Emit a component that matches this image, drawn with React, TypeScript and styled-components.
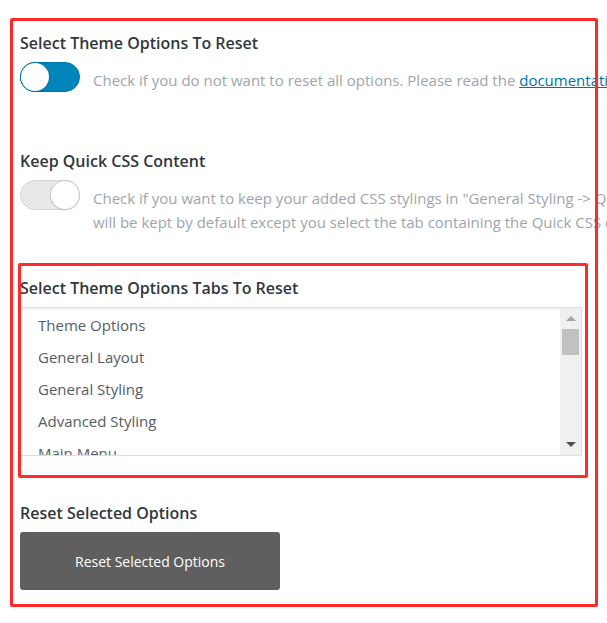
import styled, { createGlobalStyle } from "styled-components";

const GlobalStyle = createGlobalStyle`
  html, body {
    margin: 0;
    padding: 0;
    background: #ffffff;
    overflow: hidden;
  }
  body {
    font-family: "Open Sans", "Liberation Sans", sans-serif;
  }
`;

const tabs = [
  "Theme Options",
  "General Layout",
  "General Styling",
  "Advanced Styling",
  "Main Menu",
  "Footer",
];

const Page = styled.div`
  position: relative;
  width: 607px;
  height: 623px;
  padding: 33px 0 0 20px;
  box-sizing: border-box;
  overflow: hidden;
`;

const Field = styled.section<{ $gap: number }>`
  margin-bottom: ${(p) => p.$gap}px;
`;

const Title = styled.h3`
  margin: 0 0 9px;
  font-size: 16px;
  line-height: 20px;
  font-weight: 600;
  color: #32373c;
  white-space: nowrap;
`;

const Row = styled.div`
  display: flex;
  align-items: flex-start;
  gap: 13px;
`;

const Toggle = styled.span<{ $on: boolean }>`
  position: relative;
  flex: none;
  width: 60px;
  height: 30px;
  border-radius: 15px;
  box-sizing: border-box;
  background: ${(p) => (p.$on ? "#0085ba" : "#e8e8e8")};
  border: 1px solid ${(p) => (p.$on ? "#0073a5" : "#d6d6d6")};
  &::after {
    content: "";
    position: absolute;
    top: 0;
    ${(p) => (p.$on ? "left: 0;" : "right: 0;")}
    width: 28px;
    height: 28px;
    border-radius: 50%;
    background: #ffffff;
    box-shadow: 0 0 0 1px ${(p) => (p.$on ? "#0073a5" : "#c8c8c8")},
      0 1px 2px rgba(0, 0, 0, 0.15);
  }
`;

const Description = styled.p`
  margin: 0;
  padding-top: 6px;
  font-size: 15px;
  line-height: 24px;
  color: #a0a5aa;
  white-space: nowrap;
`;

const DocLink = styled.a`
  color: #0073aa;
  text-decoration: underline;
`;

const ListBox = styled.div`
  display: flex;
  width: 562px;
  height: 149px;
  box-sizing: border-box;
  border: 1px solid #dddddd;
  box-shadow: inset 0 2px 2px rgba(0, 0, 0, 0.06);
  background: #ffffff;
`;

const Options = styled.ul`
  flex: 1;
  margin: 0;
  padding: 1px 0 0 17px;
  list-style: none;
  overflow: hidden;
`;

const Option = styled.li`
  font-size: 15px;
  line-height: 32px;
  color: #555d66;
  white-space: nowrap;
`;

const Scrollbar = styled.div`
  display: flex;
  flex-direction: column;
  align-items: center;
  width: 21px;
  background: #f0f0f0;
`;

const Arrow = styled.span<{ $down?: boolean }>`
  width: 0;
  height: 0;
  border-left: 5px solid transparent;
  border-right: 5px solid transparent;
  ${(p) =>
    p.$down
      ? "border-top: 5px solid #505050; margin-top: auto; margin-bottom: 8px;"
      : "border-bottom: 5px solid #a3a3a3; margin-top: 8px;"}
`;

const Thumb = styled.span`
  width: 17px;
  height: 26px;
  margin-top: 8px;
  background: #c1c1c1;
`;

const Button = styled.button`
  width: 260px;
  height: 58px;
  border: none;
  border-radius: 3px;
  background: #5f5f5f;
  color: #ffffff;
  font-family: "Open Sans", "Liberation Sans", sans-serif;
  font-size: 14px;
`;

const Highlight = styled.div<{ $x: number; $y: number; $w: number; $h: number }>`
  position: absolute;
  left: ${(p) => p.$x}px;
  top: ${(p) => p.$y}px;
  width: ${(p) => p.$w}px;
  height: ${(p) => p.$h}px;
  box-sizing: border-box;
  border: 3px solid #ff2a2a;
  border-radius: 2px;
  pointer-events: none;
`;

export default function App() {
  return (
    <>
      <GlobalStyle />
      <Page>
        <Field $gap={59}>
          <Title>Select Theme Options To Reset</Title>
          <Row>
            <Toggle $on />
            <Description>
              Check if you do not want to reset all options. Please read the{" "}
              <DocLink href="#">documentation</DocLink> first.
            </Description>
          </Row>
        </Field>
        <Field $gap={44}>
          <Title>Keep Quick CSS Content</Title>
          <Row>
            <Toggle $on={false} />
            <Description>
              Check if you want to keep your added CSS stylings in "General Styling -&gt; Quick CSS" when resetting. The Quick CSS content
              <br />
              will be kept by default except you select the tab containing the Quick CSS option.
            </Description>
          </Row>
        </Field>
        <Field $gap={47}>
          <Title>Select Theme Options Tabs To Reset</Title>
          <ListBox>
            <Options>
              {tabs.map((t) => (
                <Option key={t}>{t}</Option>
              ))}
            </Options>
            <Scrollbar>
              <Arrow />
              <Thumb />
              <Arrow $down />
            </Scrollbar>
          </ListBox>
        </Field>
        <Field $gap={0}>
          <Title>Reset Selected Options</Title>
          <Button>Reset Selected Options</Button>
        </Field>
        <Highlight $x={10} $y={18} $w={588} $h={589} />
        <Highlight $x={18} $y={263} $w={570} $h={215} />
      </Page>
    </>
  );
}
